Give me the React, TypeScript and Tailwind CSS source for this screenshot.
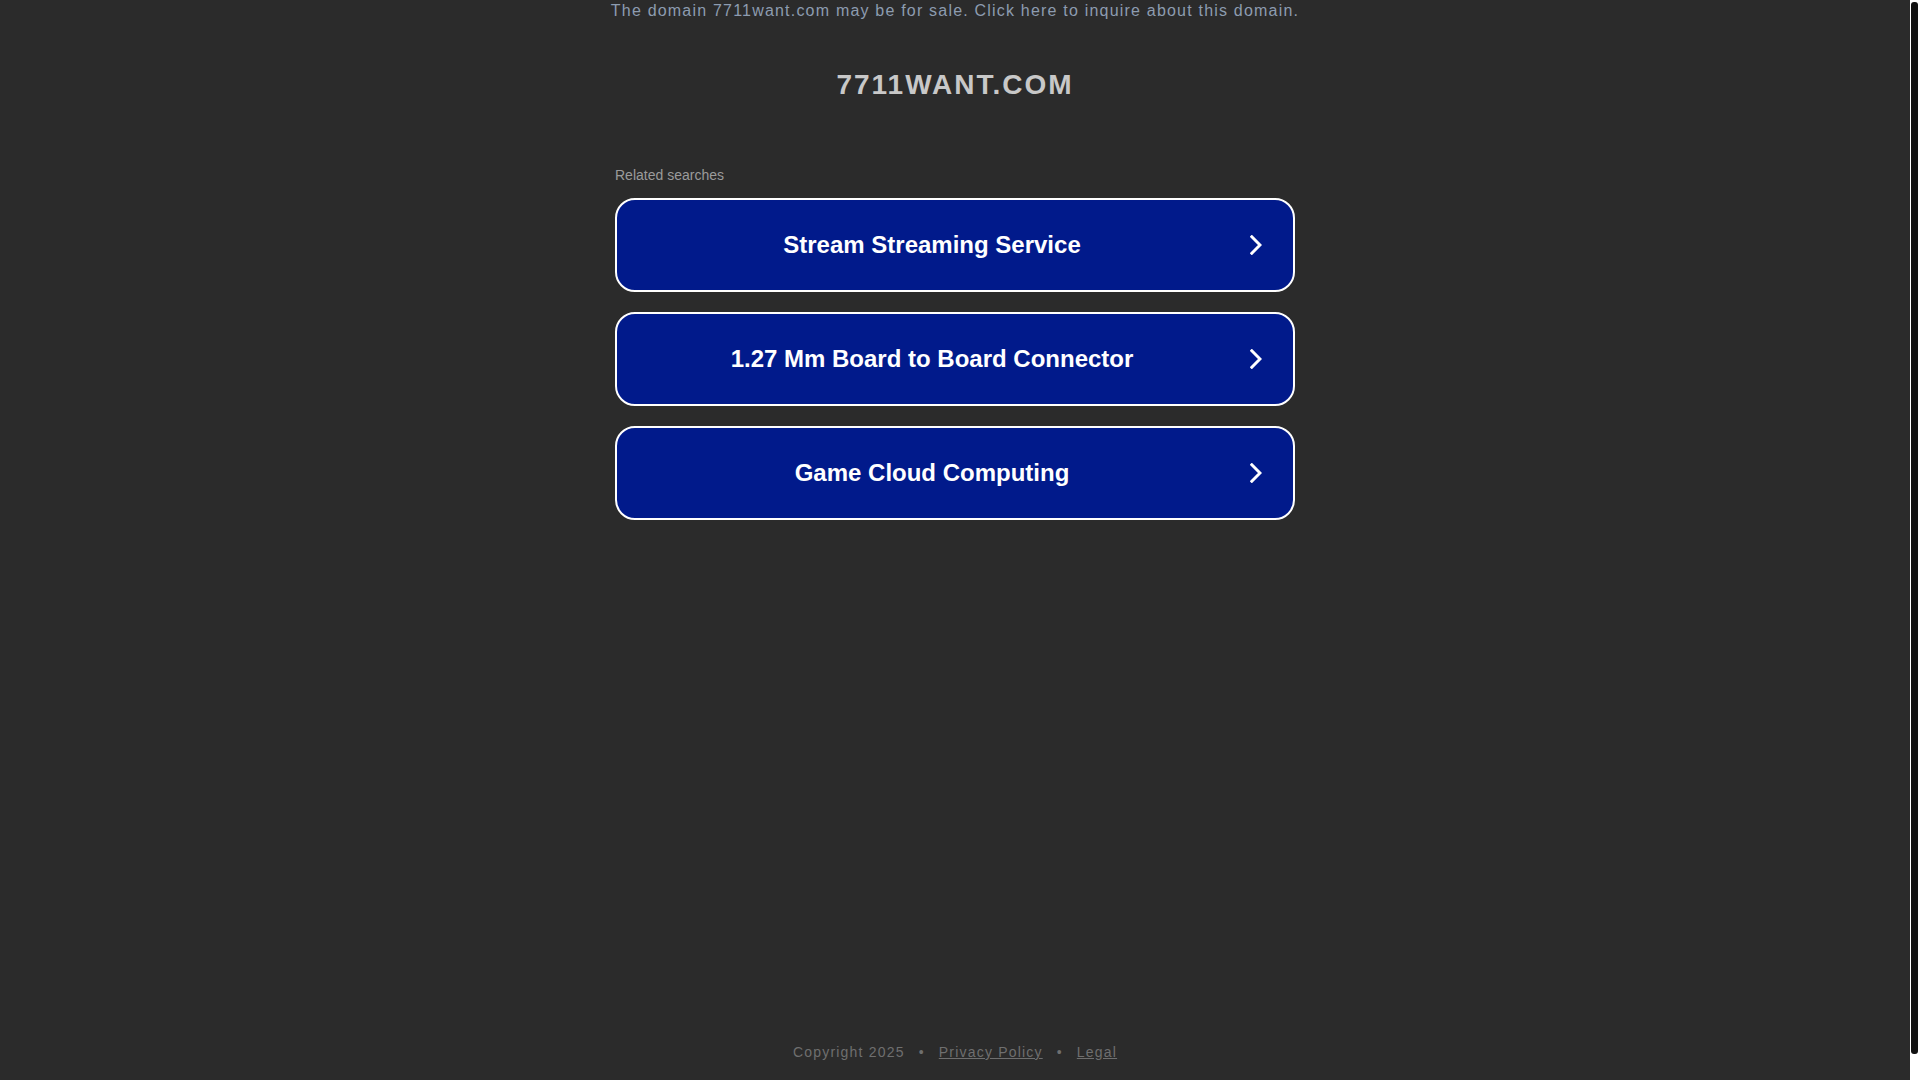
import React from 'react';

const searches = [
  'Stream Streaming Service',
  '1.27 Mm Board to Board Connector',
  'Game Cloud Computing',
];

function Chevron() {
  return (
    <svg width="12" height="20" viewBox="0 0 12 20" fill="none">
      <polyline
        points="1.8,1.8 10,10 1.8,18.2"
        stroke="#ffffff"
        strokeWidth="3"
        strokeLinecap="square"
        strokeLinejoin="miter"
      />
    </svg>
  );
}

export default function App() {
  return (
    <div
      className="h-screen flex bg-[#2b2b2b] overflow-hidden"
      style={{ fontFamily: '"Liberation Sans", Arial, sans-serif' }}
    >
      <div className="flex-1 min-h-[1108px] flex flex-col items-center">
        <a
          href="#"
          className="h-[22px] leading-[22px] text-[16px] tracking-[1.2px] text-[#8d9cb0] no-underline"
        >
          The domain 7711want.com may be for sale. Click here to inquire about this domain.
        </a>

        <h1 className="mt-[45px] text-[28px] leading-[36px] font-bold tracking-[2px] text-[#c8c8c8]">
          7711WANT.COM
        </h1>

        <div className="w-[680px] mt-[62px]">
          <div className="text-[14px] leading-[20px] text-[#9b9b9b]">Related searches</div>

          <div className="mt-[13px] flex flex-col gap-[20px]">
            {searches.map((s) => (
              <a
                key={s}
                href="#"
                className="h-[94px] flex items-center pl-[14px] pr-[14px] rounded-[20px] border-2 border-white bg-[#011a8b] text-white no-underline"
              >
                <span className="flex-1 text-center text-[24px] font-bold">{s}</span>
                <span className="w-[46px] flex justify-center">
                  <Chevron />
                </span>
              </a>
            ))}
          </div>
        </div>

        <footer className="mt-auto pb-[46px] text-[14px] leading-[20px] tracking-[1.2px] text-[#6f6f6f]">
          <span>Copyright 2025</span>
          <span className="mx-[14px]">•</span>
          <a href="#" className="underline">Privacy Policy</a>
          <span className="mx-[14px]">•</span>
          <a href="#" className="underline">Legal</a>
        </footer>
      </div>

      {/* page scrollbar */}
      <div className="w-[10px] h-full bg-white flex pl-px pr-[2px] py-[2px]">
        <div className="flex-1 h-[1052px] rounded-[3px] bg-[#111111]" />
      </div>
    </div>
  );
}
